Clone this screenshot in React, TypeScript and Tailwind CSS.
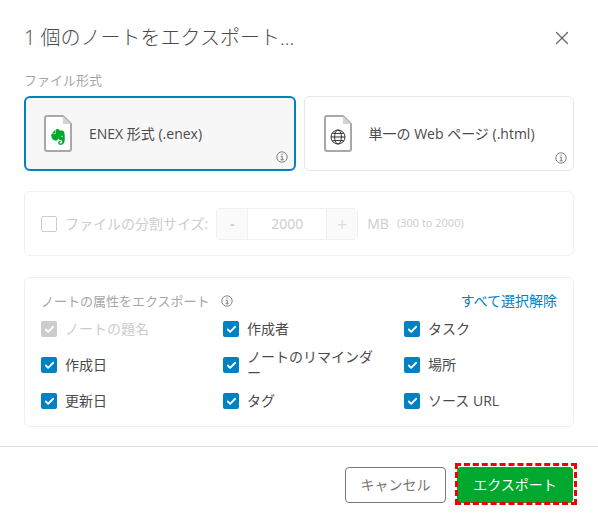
import { ReactNode } from "react";
import { Check, X } from "lucide-react";
import { SiEvernote } from "react-icons/si";

const font = "font-['Open_Sans','Noto_Sans_CJK_JP',sans-serif]";

function InfoMark({ className = "" }: { className?: string }) {
  return (
    <svg className={className} width="12" height="12" viewBox="0 0 12 12" fill="none" stroke="#777">
      <circle cx="6" cy="6" r="5.2" strokeWidth="0.9" />
      <path d="M4.8 5.2H6.2V8.8M4.6 8.8H7.6" strokeWidth="1" />
      <path d="M5.6 3.2H6.6" strokeWidth="1.2" />
    </svg>
  );
}

function GlobeMark() {
  return (
    <svg width="16" height="16" viewBox="0 0 16 16" fill="none" stroke="#333" strokeWidth="1">
      <circle cx="8" cy="8" r="7" />
      <ellipse cx="8" cy="8" rx="3.4" ry="7" />
      <path d="M1 8H15M2.2 4.4H13.8M2.2 11.6H13.8" />
    </svg>
  );
}

function FileIcon({ children }: { children: ReactNode }) {
  return (
    <div className="relative h-[37px] w-[28px] shrink-0">
      <svg width="28" height="37" viewBox="0 0 28 37" fill="none">
        <path
          d="M3 1h16l8 8v25a2 2 0 0 1-2 2H3a2 2 0 0 1-2-2V3a2 2 0 0 1 2-2z"
          stroke="#a8a8a8"
          strokeWidth="2"
          fill="#fff"
        />
        <path d="M19 1v8h8z" fill="#d4d4d4" />
      </svg>
      <div className="absolute inset-0 flex items-center justify-center pt-[6px]">{children}</div>
    </div>
  );
}

function FormatCard({
  selected = false,
  icon,
  label,
}: {
  selected?: boolean;
  icon: ReactNode;
  label: ReactNode;
}) {
  return (
    <div
      className={
        selected
          ? "relative flex h-[75px] flex-1 items-center gap-[17px] rounded-md border-2 border-[#0081c2] bg-[#f7f7f7] pl-[18px]"
          : "relative flex h-[75px] flex-1 items-center gap-[17px] rounded-md border border-[#e6e6e6] bg-white pl-[19px]"
      }
    >
      <FileIcon>{icon}</FileIcon>
      <span className="text-sm font-medium text-[#4a4a4a]">{label}</span>
      <InfoMark className="absolute right-[6px] bottom-[6px]" />
    </div>
  );
}

function Attr({
  label,
  disabled = false,
}: {
  label: string;
  disabled?: boolean;
}) {
  return (
    <div className="flex h-[18px] items-center gap-2">
      <span
        className={
          disabled
            ? "flex h-4 w-4 shrink-0 items-center justify-center rounded-[2px] bg-[#cccccc]"
            : "flex h-4 w-4 shrink-0 items-center justify-center rounded-[2px] bg-[#0081c2]"
        }
      >
        <Check className="text-white" size={11} strokeWidth={4} />
      </span>
      <span
        className={
          disabled
            ? "w-[128px] text-sm leading-[16px] text-[#cccccc]"
            : "w-[128px] text-sm leading-[16px] text-[#4a4a4a]"
        }
      >
        {label}
      </span>
    </div>
  );
}

export default function App() {
  return (
    <div className={`${font} flex h-[523px] w-[598px] flex-col bg-white`}>
      <div className="flex items-center justify-between pt-[23px] pr-[25px] pl-6">
        <h1 className="text-[20px] leading-[30px] font-light text-[#4a4a4a]">
          1 個のノートをエクスポート...
        </h1>
        <X className="text-[#666]" size={22} strokeWidth={1.35} />
      </div>

      <div className="mt-[18px] pr-6 pl-6">
        <div className="text-[13px] leading-[18px] text-[#a6a6a6]">ファイル形式</div>
        <div className="mt-[7px] flex gap-2">
          <FormatCard
            selected
            label={
              <>
                ENEX <span className="font-normal">形式</span> (.enex)
              </>
            }
            icon={<SiEvernote className="text-[#00a82d]" size={16} />}
          />
          <FormatCard
            label={
              <>
                <span className="font-normal">単一の</span> Web <span className="font-normal">ページ</span> (.html)
              </>
            }
            icon={<GlobeMark />}
          />
        </div>

        <div className="mt-5 flex h-[65px] items-center rounded-md border border-[#f0f0f0] pl-4">
          <span className="h-4 w-4 rounded-[2px] border border-[#cccccc]" />
          <span className="ml-2 text-sm text-[#cccccc]">ファイルの分割サイズ:</span>
          <div className="ml-2 flex h-8 w-[142px] rounded-[4px] border border-[#f0f0f0] text-sm text-[#cccccc]">
            <span className="flex w-[31px] items-center justify-center border-r border-[#f0f0f0] bg-[#fafafa] font-bold">
              -
            </span>
            <span className="flex flex-1 items-center justify-center">2000</span>
            <span className="flex w-[31px] items-center justify-center border-l border-[#f0f0f0] bg-[#fafafa] text-lg text-[#dddddd]">
              +
            </span>
          </div>
          <span className="ml-[9px] text-sm text-[#cccccc]">MB</span>
          <span className="ml-[8px] text-[11px] text-[#cccccc]">(300 to 2000)</span>
        </div>

        <div className="mt-[21px] h-[150px] rounded-md border border-[#f0f0f0] pt-[13px] pr-4 pl-4">
          <div className="flex items-center justify-between">
            <div className="flex items-center gap-[11px]">
              <span className="text-[13px] leading-[20px] text-[#a6a6a6]">ノートの属性をエクスポート</span>
              <InfoMark />
            </div>
            <span className="text-sm leading-[20px] text-[#0081c2]">すべて選択解除</span>
          </div>
          <div className="mt-[9px] grid grid-cols-[182px_181px_1fr] gap-y-[18px]">
            <Attr disabled label="ノートの題名" />
            <Attr label="作成者" />
            <Attr label="タスク" />
            <Attr label="作成日" />
            <Attr label="ノートのリマインダー" />
            <Attr label="場所" />
            <Attr label="更新日" />
            <Attr label="タグ" />
            <Attr label="ソース URL" />
          </div>
        </div>
      </div>

      <div className="mt-[19px] flex flex-1 items-start justify-end gap-[11px] border-t border-[#dcdcdc] pt-5 pr-[25px]">
        <button className="h-9 w-[101px] rounded-[4px] border border-[#777] bg-white text-sm text-[#777]">
          キャンセル
        </button>
        <div className="relative">
          <button className="h-9 w-[116px] rounded-[4px] bg-[#00a82d] text-sm text-white">
            エクスポート
          </button>
          <span className="absolute -top-1 -right-1 -bottom-[2px] -left-[2px] border-[3px] border-dashed border-[#f20000]" />
        </div>
      </div>
    </div>
  );
}
